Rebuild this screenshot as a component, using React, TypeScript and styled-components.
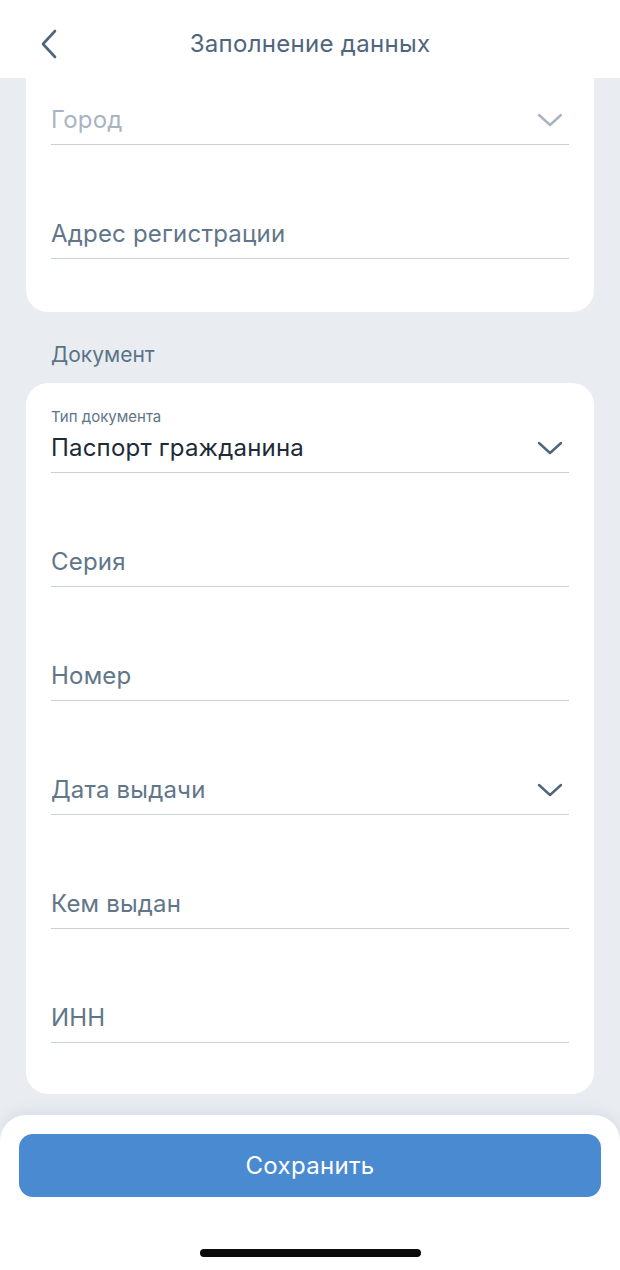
import React from 'react';
import styled, { createGlobalStyle } from 'styled-components';

const GlobalStyle = createGlobalStyle`
  html, body { margin: 0; padding: 0; }
  body {
    background: #e9edf2;
    font-family: Inter, Roboto, 'Liberation Sans', sans-serif;
    -webkit-font-smoothing: antialiased;
  }
`;

const Screen = styled.div`
  width: 620px;
  height: 1270px;
  display: flex;
  flex-direction: column;
  background: #e9edf2;
  overflow: hidden;
`;

const Header = styled.header`
  height: 78px;
  flex-shrink: 0;
  background: #fff;
  display: flex;
  align-items: center;
  justify-content: center;
  position: relative;
`;

const BackButton = styled.button`
  position: absolute;
  left: 32px;
  top: 24px;
  width: 34px;
  height: 40px;
  border: none;
  background: none;
  padding: 0;
  display: flex;
  align-items: center;
  justify-content: center;
`;

const Title = styled.h1`
  margin: 0;
  font-size: 24px;
  letter-spacing: 0.3px;
  font-weight: 400;
  color: #4e667b;
  margin-top: 8px;
`;

const Content = styled.main`
  flex: 1;
  padding: 0 26px;
  display: flex;
  flex-direction: column;
`;

const Card = styled.section<{ $cut?: boolean }>`
  background: #fff;
  border-radius: ${p => (p.$cut ? '0 0 22px 22px' : '22px')};
  padding: ${p => (p.$cut ? '20px 25px 53px' : '25px 25px 51px')};
  display: flex;
  flex-direction: column;
`;

const SectionLabel = styled.div`
  margin: 31px 0 16px 25px;
  font-size: 21px;
  line-height: 24px;
  color: #5b7387;
`;

const Field = styled.div<{ $first?: boolean }>`
  margin-top: ${p => (p.$first ? '0' : '67px')};
  display: flex;
  flex-direction: column;
`;

const SmallLabel = styled.div`
  font-size: 15px;
  line-height: 18px;
  color: #5f7587;
`;

const Row = styled.div<{ $h?: number }>`
  height: ${p => p.$h ?? 47}px;
  box-sizing: border-box;
  padding-bottom: 3px;
  display: flex;
  align-items: center;
  justify-content: space-between;
  border-bottom: 1px solid #c8d0d8;
`;

const Text = styled.span<{ $tone: 'muted' | 'label' | 'value' }>`
  font-size: 24px;
  letter-spacing: 0.2px;
  color: ${p => (p.$tone === 'muted' ? '#a8b5c1' : p.$tone === 'value' ? '#1d2a37' : '#617689')};
`;

const Sheet = styled.footer`
  margin-top: 21px;
  flex: 1;
  background: #fff;
  border-radius: 26px 26px 0 0;
  box-shadow: 0 -4px 14px rgba(40, 60, 80, 0.08);
  padding: 19px 19px 0;
  display: flex;
  flex-direction: column;
  align-items: center;
`;

const SaveButton = styled.button`
  width: 100%;
  height: 63px;
  border: none;
  border-radius: 14px;
  background: #4a8ad0;
  color: #fff;
  font-family: inherit;
  font-size: 24px;
  letter-spacing: 0.3px;
  font-weight: 400;
`;

const HomeBar = styled.div`
  margin-top: 52px;
  width: 221px;
  height: 8px;
  border-radius: 4px;
  background: #0b0b0b;
`;

const Chevron = ({ muted }: { muted?: boolean }) => (
  <svg width="26" height="16" viewBox="0 0 26 16" style={{ marginRight: 6 }}>
    <polyline
      points="2,3 13,13 24,3"
      fill="none"
      stroke={muted ? '#a8b5c1' : '#4e667b'}
      strokeWidth="2.4"
      strokeLinecap="round"
      strokeLinejoin="round"
    />
  </svg>
);

const BackIcon = () => (
  <svg width="20" height="32" viewBox="0 0 20 32">
    <polyline
      points="16,3 4,16 16,29"
      fill="none"
      stroke="#4e667b"
      strokeWidth="2.6"
      strokeLinecap="round"
      strokeLinejoin="round"
    />
  </svg>
);

const docFields: { label: string; select?: boolean }[] = [
  { label: 'Серия' },
  { label: 'Номер' },
  { label: 'Дата выдачи', select: true },
  { label: 'Кем выдан' },
  { label: 'ИНН' },
];

export default function App() {
  return (
    <Screen>
      <GlobalStyle />
      <Header>
        <BackButton aria-label="Назад">
          <BackIcon />
        </BackButton>
        <Title>Заполнение данных</Title>
      </Header>
      <Content>
        <Card $cut>
          <Field $first>
            <Row>
              <Text $tone="muted">Город</Text>
              <Chevron muted />
            </Row>
          </Field>
          <Field>
            <Row>
              <Text $tone="label">Адрес регистрации</Text>
            </Row>
          </Field>
        </Card>

        <SectionLabel>Документ</SectionLabel>

        <Card>
          <Field $first>
            <SmallLabel>Тип документа</SmallLabel>
            <Row>
              <Text $tone="value">Паспорт гражданина</Text>
              <Chevron />
            </Row>
          </Field>
          {docFields.map(f => (
            <Field key={f.label}>
              <Row>
                <Text $tone="label">{f.label}</Text>
                {f.select && <Chevron />}
              </Row>
            </Field>
          ))}
        </Card>
      </Content>
      <Sheet>
        <SaveButton>Сохранить</SaveButton>
        <HomeBar />
      </Sheet>
    </Screen>
  );
}
